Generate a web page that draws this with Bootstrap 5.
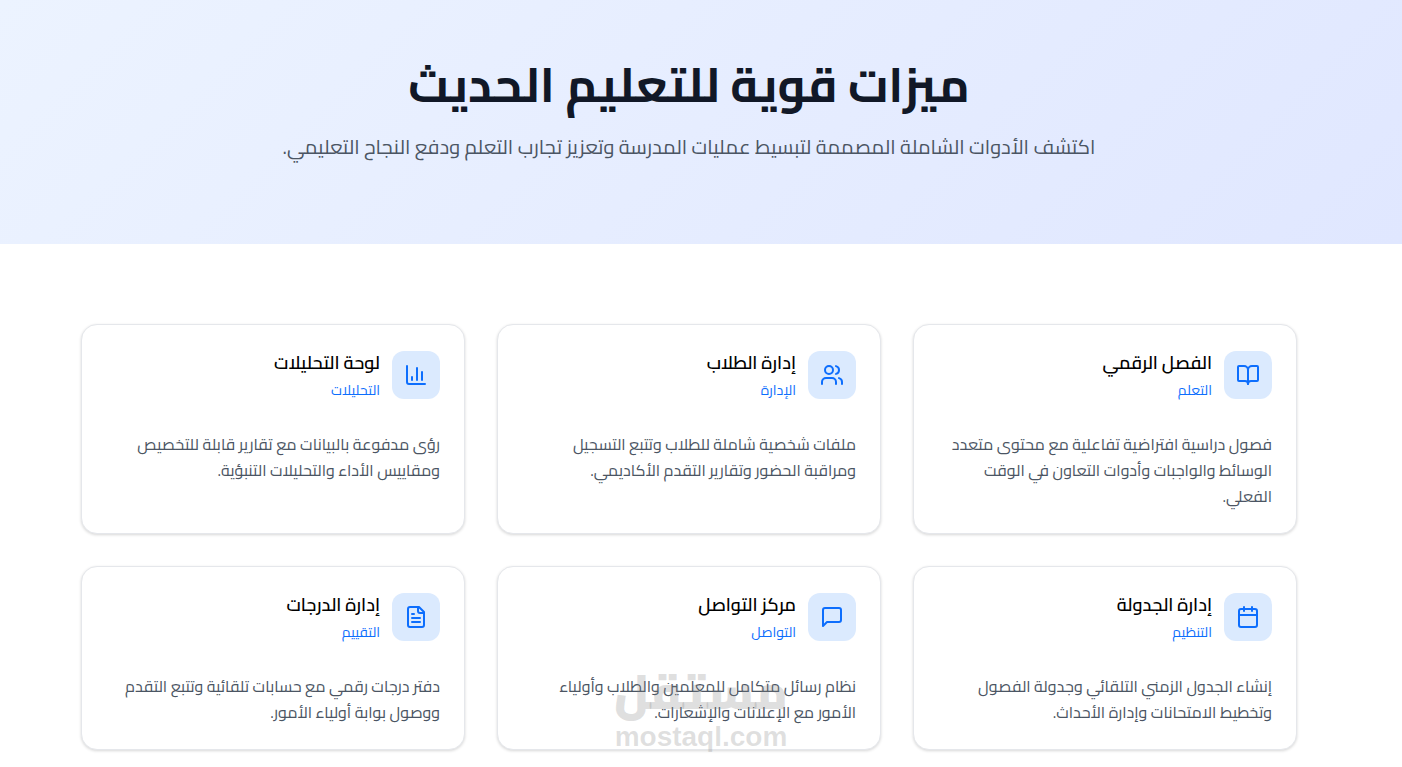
<!DOCTYPE html>
<html lang="ar" dir="rtl">
<head>
    <meta charset="UTF-8">
    <meta name="viewport" content="width=device-width, initial-scale=1.0">
    <title>ميزات قوية للتعليم الحديث</title>
    <link href="https://cdn.jsdelivr.net/npm/bootstrap@5.3.0/dist/css/bootstrap.min.css" rel="stylesheet">
    <style>
        body {
            font-family: "Cairo", "Noto Sans", "DejaVu Sans", sans-serif;
            background: #fff;
            overflow: hidden;
            height: 767px;
            position: relative;
        }
        .hero-band {
            height: 244px;
            background: linear-gradient(135deg, #ecf3ff, #e0e7ff);
            padding: 55px 24px 0 0;
            text-align: center;
        }
        .hero-band h1 {
            font-size: 48px;
            font-weight: 700;
            line-height: 58px;
            color: #111827;
            margin-bottom: 19px;
        }
        .hero-band p {
            font-size: 20px;
            line-height: 30px;
            color: #4b5563;
            margin: 0;
        }
        .feature-area {
            padding: 80px 105px 0 81px;
        }
        .feature-grid {
            display: grid;
            grid-template-columns: repeat(3, 384px);
            gap: 32px;
        }
        .feature-box {
            background: #fff;
            border: 1px solid #e5e7eb;
            border-radius: 16px;
            box-shadow: 0 1px 3px rgba(0, 0, 0, .16);
            padding: 26px 24px 24px;
        }
        .box-head {
            gap: 12px;
        }
        .icon-tile {
            width: 48px;
            height: 48px;
            border-radius: 12px;
            background: #dbeafe;
            color: #0d6efd;
            flex-shrink: 0;
        }
        .icon-tile svg {
            width: 24px;
            height: 24px;
            fill: none;
            stroke: currentColor;
            stroke-width: 2;
            stroke-linecap: round;
            stroke-linejoin: round;
        }
        .box-title {
            font-size: 18px;
            font-weight: 600;
            line-height: 24px;
            color: #000;
            margin: 0;
        }
        .box-tag {
            font-size: 14px;
            line-height: 21px;
            color: #0d6efd;
            margin: 5px 0 0;
        }
        .box-text {
            font-size: 16px;
            line-height: 26px;
            color: #4b5563;
            margin: 30px 0 0;
        }
        .mostaql-mark {
            position: absolute;
            left: 600px;
            top: 660px;
            width: 202px;
            text-align: center;
            color: rgba(130, 130, 130, .25);
            pointer-events: none;
        }
        .mostaql-mark b {
            display: block;
            font-size: 48px;
            font-weight: 900;
            line-height: 63px;
        }
        .mostaql-mark span {
            display: block;
            font-family: "Liberation Sans", sans-serif;
            font-size: 28px;
            line-height: 28px;
            font-weight: 700;
        }
    </style>
</head>
<body>
    <section class="hero-band">
        <h1>ميزات قوية للتعليم الحديث</h1>
        <p>اكتشف الأدوات الشاملة المصممة لتبسيط عمليات المدرسة وتعزيز تجارب التعلم ودفع النجاح التعليمي.</p>
    </section>
    <section class="feature-area">
        <div class="feature-grid">
            <div class="feature-box">
                <div class="d-flex align-items-start box-head">
                    <div class="icon-tile d-flex align-items-center justify-content-center"><svg viewBox="0 0 24 24"><path d="M12 7v14"/><path d="M3 18a1 1 0 0 1-1-1V4a1 1 0 0 1 1-1h5a4 4 0 0 1 4 4 4 4 0 0 1 4-4h5a1 1 0 0 1 1 1v13a1 1 0 0 1-1 1h-6a3 3 0 0 0-3 3 3 3 0 0 0-3-3z"/></svg></div>
                    <div>
                        <h3 class="box-title">الفصل الرقمي</h3>
                        <p class="box-tag">التعلم</p>
                    </div>
                </div>
                <p class="box-text">فصول دراسية افتراضية تفاعلية مع محتوى متعدد الوسائط والواجبات وأدوات التعاون في الوقت الفعلي.</p>
            </div>
            <div class="feature-box">
                <div class="d-flex align-items-start box-head">
                    <div class="icon-tile d-flex align-items-center justify-content-center"><svg viewBox="0 0 24 24"><path d="M16 21v-2a4 4 0 0 0-4-4H6a4 4 0 0 0-4 4v2"/><circle cx="9" cy="7" r="4"/><path d="M22 21v-2a4 4 0 0 0-3-3.87"/><path d="M16 3.13a4 4 0 0 1 0 7.75"/></svg></div>
                    <div>
                        <h3 class="box-title">إدارة الطلاب</h3>
                        <p class="box-tag">الإدارة</p>
                    </div>
                </div>
                <p class="box-text">ملفات شخصية شاملة للطلاب وتتبع التسجيل ومراقبة الحضور وتقارير التقدم الأكاديمي.</p>
            </div>
            <div class="feature-box">
                <div class="d-flex align-items-start box-head">
                    <div class="icon-tile d-flex align-items-center justify-content-center"><svg viewBox="0 0 24 24"><path d="M3 3v16a2 2 0 0 0 2 2h16"/><path d="M18 17V9"/><path d="M13 17V5"/><path d="M8 17v-3"/></svg></div>
                    <div>
                        <h3 class="box-title">لوحة التحليلات</h3>
                        <p class="box-tag">التحليلات</p>
                    </div>
                </div>
                <p class="box-text">رؤى مدفوعة بالبيانات مع تقارير قابلة للتخصيص ومقاييس الأداء والتحليلات التنبؤية.</p>
            </div>
            <div class="feature-box">
                <div class="d-flex align-items-start box-head">
                    <div class="icon-tile d-flex align-items-center justify-content-center"><svg viewBox="0 0 24 24"><path d="M8 2v4"/><path d="M16 2v4"/><rect x="3" y="4" width="18" height="18" rx="2"/><path d="M3 10h18"/></svg></div>
                    <div>
                        <h3 class="box-title">إدارة الجدولة</h3>
                        <p class="box-tag">التنظيم</p>
                    </div>
                </div>
                <p class="box-text">إنشاء الجدول الزمني التلقائي وجدولة الفصول وتخطيط الامتحانات وإدارة الأحداث.</p>
            </div>
            <div class="feature-box">
                <div class="d-flex align-items-start box-head">
                    <div class="icon-tile d-flex align-items-center justify-content-center"><svg viewBox="0 0 24 24"><path d="M21 15a2 2 0 0 1-2 2H7l-4 4V5a2 2 0 0 1 2-2h14a2 2 0 0 1 2 2z"/></svg></div>
                    <div>
                        <h3 class="box-title">مركز التواصل</h3>
                        <p class="box-tag">التواصل</p>
                    </div>
                </div>
                <p class="box-text">نظام رسائل متكامل للمعلمين والطلاب وأولياء الأمور مع الإعلانات والإشعارات.</p>
            </div>
            <div class="feature-box">
                <div class="d-flex align-items-start box-head">
                    <div class="icon-tile d-flex align-items-center justify-content-center"><svg viewBox="0 0 24 24"><path d="M15 2H6a2 2 0 0 0-2 2v16a2 2 0 0 0 2 2h12a2 2 0 0 0 2-2V7Z"/><path d="M14 2v4a2 2 0 0 0 2 2h4"/><path d="M10 9H8"/><path d="M16 13H8"/><path d="M16 17H8"/></svg></div>
                    <div>
                        <h3 class="box-title">إدارة الدرجات</h3>
                        <p class="box-tag">التقييم</p>
                    </div>
                </div>
                <p class="box-text">دفتر درجات رقمي مع حسابات تلقائية وتتبع التقدم ووصول بوابة أولياء الأمور.</p>
            </div>
        </div>
    </section>
    <div class="mostaql-mark"><b>مستقل</b><span>mostaql.com</span></div>
    <script src="https://cdn.jsdelivr.net/npm/bootstrap@5.3.0/dist/js/bootstrap.bundle.min.js"></script>
</body>
</html>
